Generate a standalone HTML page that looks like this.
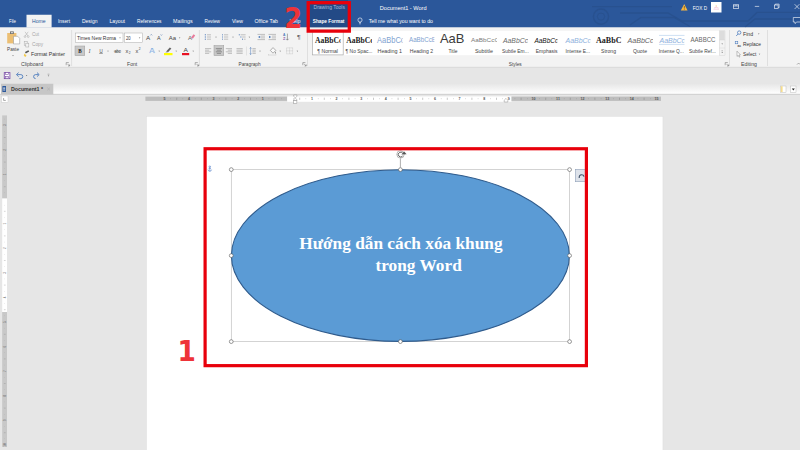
<!DOCTYPE html>
<html lang="vi">
<head>
<meta charset="utf-8">
<title>Document1 - Word</title>
<style>html,body{margin:0;padding:0;background:#e6e6e6;overflow:hidden}svg{display:block}</style>
</head>
<body>
<svg width="800" height="450" viewBox="0 0 800 450">
<defs>
<linearGradient id="tabbar" x1="0" y1="0" x2="0" y2="1"><stop offset="0" stop-color="#e6e6e6"/><stop offset="1" stop-color="#ffffff"/></linearGradient>
<clipPath id="gal"><rect x="312" y="32.5" width="407" height="23.1"/></clipPath>
</defs>
<rect x="0.00" y="0.00" width="800.00" height="450.00" fill="#e6e6e6" />
<rect x="0.00" y="0.00" width="800.00" height="27.50" fill="#2b579a" />
<g stroke="#28518f" stroke-width="1.4" fill="none">
<path d="M592 6.6 H672"/>
<circle cx="601" cy="16.6" r="7.6"/>
<circle cx="601" cy="16.6" r="3.6" stroke-width="1"/>
<path d="M620 13 H668 L682 21 H700"/>
<path d="M630 25 L641 17.5 H674 L690 26.5"/>
<path d="M700 21 H748 L757 12.4 H800"/>
<path d="M745 27 L755 19 H800"/>
</g>
<rect x="310.00" y="0.00" width="38.00" height="27.50" fill="#234a86" />
<rect x="26.50" y="14.75" width="25.10" height="12.85" fill="#f3f3f3" />
<text x="9.00" y="23.27" font-family="'Liberation Sans', sans-serif" font-size="5.6" fill="#ffffff" font-weight="normal" font-style="normal" text-anchor="start" textLength="7.00" lengthAdjust="spacingAndGlyphs" >File</text>
<text x="32.00" y="23.27" font-family="'Liberation Sans', sans-serif" font-size="5.6" fill="#2b579a" font-weight="normal" font-style="normal" text-anchor="start" textLength="13.60" lengthAdjust="spacingAndGlyphs" >Home</text>
<text x="58.00" y="23.27" font-family="'Liberation Sans', sans-serif" font-size="5.6" fill="#ffffff" font-weight="normal" font-style="normal" text-anchor="start" textLength="12.00" lengthAdjust="spacingAndGlyphs" >Insert</text>
<text x="82.00" y="23.27" font-family="'Liberation Sans', sans-serif" font-size="5.6" fill="#ffffff" font-weight="normal" font-style="normal" text-anchor="start" textLength="15.50" lengthAdjust="spacingAndGlyphs" >Design</text>
<text x="109.40" y="23.27" font-family="'Liberation Sans', sans-serif" font-size="5.6" fill="#ffffff" font-weight="normal" font-style="normal" text-anchor="start" textLength="15.60" lengthAdjust="spacingAndGlyphs" >Layout</text>
<text x="137.00" y="23.27" font-family="'Liberation Sans', sans-serif" font-size="5.6" fill="#ffffff" font-weight="normal" font-style="normal" text-anchor="start" textLength="24.50" lengthAdjust="spacingAndGlyphs" >References</text>
<text x="173.00" y="23.27" font-family="'Liberation Sans', sans-serif" font-size="5.6" fill="#ffffff" font-weight="normal" font-style="normal" text-anchor="start" textLength="19.75" lengthAdjust="spacingAndGlyphs" >Mailings</text>
<text x="204.50" y="23.27" font-family="'Liberation Sans', sans-serif" font-size="5.6" fill="#ffffff" font-weight="normal" font-style="normal" text-anchor="start" textLength="15.50" lengthAdjust="spacingAndGlyphs" >Review</text>
<text x="232.00" y="23.27" font-family="'Liberation Sans', sans-serif" font-size="5.6" fill="#ffffff" font-weight="normal" font-style="normal" text-anchor="start" textLength="11.00" lengthAdjust="spacingAndGlyphs" >View</text>
<text x="254.50" y="23.27" font-family="'Liberation Sans', sans-serif" font-size="5.6" fill="#ffffff" font-weight="normal" font-style="normal" text-anchor="start" textLength="23.50" lengthAdjust="spacingAndGlyphs" >Office Tab</text>
<text x="289.50" y="23.27" font-family="'Liberation Sans', sans-serif" font-size="5.6" fill="#ffffff" font-weight="normal" font-style="normal" text-anchor="start" textLength="11.00" lengthAdjust="spacingAndGlyphs" >Help</text>
<text x="313.50" y="8.80" font-family="'Liberation Sans', sans-serif" font-size="5.0" fill="#a9bbd9" font-weight="normal" font-style="normal" text-anchor="start" textLength="31.50" lengthAdjust="spacingAndGlyphs" >Drawing Tools</text>
<text x="312.75" y="23.27" font-family="'Liberation Sans', sans-serif" font-size="5.6" fill="#ffffff" font-weight="bold" font-style="normal" text-anchor="start" textLength="31.65" lengthAdjust="spacingAndGlyphs" >Shape Format</text>
<g stroke="#fff" stroke-width="0.6" fill="none"><circle cx="360" cy="20" r="2.1"/><path d="M359 22.6 H361 M359.2 23.8 H360.8"/></g>
<text x="368.75" y="23.27" font-family="'Liberation Sans', sans-serif" font-size="5.6" fill="#ffffff" font-weight="normal" font-style="normal" text-anchor="start" textLength="64.25" lengthAdjust="spacingAndGlyphs" >Tell me what you want to do</text>
<text x="379.75" y="9.77" font-family="'Liberation Sans', sans-serif" font-size="5.6" fill="#ffffff" font-weight="normal" font-style="normal" text-anchor="start" textLength="46.75" lengthAdjust="spacingAndGlyphs" >Document1  -  Word</text>
<path d="M684.2 4 L687.6 10.4 H680.8 Z" fill="#f5b642" />
<rect x="683.90" y="6.00" width="0.60" height="2.60" fill="#5a3d00" />
<rect x="683.90" y="9.10" width="0.60" height="0.60" fill="#5a3d00" />
<text x="692.75" y="9.77" font-family="'Liberation Sans', sans-serif" font-size="5.6" fill="#ffffff" font-weight="normal" font-style="normal" text-anchor="start" textLength="14.25" lengthAdjust="spacingAndGlyphs" >FOX D</text>
<rect x="711.00" y="2.00" width="10.50" height="10.50" fill="#ffffff" />
<g fill="none" stroke="#e8a0c8" stroke-width="0.5"><path d="M713.5 9.2 H719 M714 8 Q716.2 6.6 718.5 8"/></g>
<path d="M716.2 5 V7" fill="none" stroke="#f0b060" stroke-width="0.5" />
<g stroke="#fff" stroke-width="0.6" fill="none">
<rect x="733.3" y="4.8" width="5.4" height="3.8"/><path d="M733.3 6 H738.7 M736 4.8 V6"/>
<path d="M754.8 6.4 H759.2"/>
<rect x="774.3" y="5" width="3.8" height="3.6"/><path d="M775.3 5 V4.1 H779.1 V7.7 H778.1"/>
<path d="M794.6 4.2 L799.4 9 M799.4 4.2 L794.6 9"/>
<path d="M793.3 17.5 H800 M793.3 17.5 V22 H795 V23.6 L796.8 22 H800"/>
</g>
<rect x="0.00" y="27.50" width="800.00" height="39.50" fill="#f3f3f3" />
<rect x="0.00" y="66.80" width="800.00" height="1.20" fill="#dcdcdc" />
<line x1="71.60" y1="30.00" x2="71.60" y2="66.00" stroke="#d2d2d2" stroke-width="0.6" />
<line x1="199.40" y1="30.00" x2="199.40" y2="66.00" stroke="#d2d2d2" stroke-width="0.6" />
<line x1="307.50" y1="30.00" x2="307.50" y2="66.00" stroke="#d2d2d2" stroke-width="0.6" />
<line x1="729.50" y1="30.00" x2="729.50" y2="66.00" stroke="#d2d2d2" stroke-width="0.6" />
<line x1="767.50" y1="30.00" x2="767.50" y2="66.00" stroke="#d2d2d2" stroke-width="0.6" />
<g>
<rect x="7.20" y="33.00" width="9.20" height="10.40" fill="#ecbf74" />
<rect x="10.00" y="31.40" width="3.80" height="2.60" fill="#707070" />
<rect x="10.90" y="32.20" width="2.00" height="1.00" fill="#e9e9e9" />
<path d="M13.5 36.3 H17.7 L19.7 38.3 V43.9 H13.5 Z" fill="#ffffff" stroke="#8a8a8a" stroke-width="0.5" />
</g>
<text x="7.00" y="50.73" font-family="'Liberation Sans', sans-serif" font-size="5.5" fill="#444444" font-weight="normal" font-style="normal" text-anchor="start" textLength="12.00" lengthAdjust="spacingAndGlyphs" >Paste</text>
<path d="M12.20 55.20 L13.80 55.20 L13.00 56.20 Z" fill="#666" />
<g stroke="#a8a8a8" stroke-width="0.5" fill="none"><path d="M25 31.8 L28 36 M28.2 31.8 L25.2 36"/><circle cx="25" cy="36.6" r="0.9"/><circle cx="28.2" cy="36.6" r="0.9"/></g>
<text x="32.00" y="36.38" font-family="'Liberation Sans', sans-serif" font-size="5.5" fill="#a6a6a6" font-weight="normal" font-style="normal" text-anchor="start" textLength="7.00" lengthAdjust="spacingAndGlyphs" >Cut</text>
<g stroke="#a8a8a8" stroke-width="0.5" fill="#f3f3f3"><rect x="24.2" y="41.6" width="3" height="3.8"/><rect x="25.8" y="43.2" width="3" height="3.8"/></g>
<text x="32.00" y="46.38" font-family="'Liberation Sans', sans-serif" font-size="5.5" fill="#a6a6a6" font-weight="normal" font-style="normal" text-anchor="start" textLength="11.00" lengthAdjust="spacingAndGlyphs" >Copy</text>
<path d="M25 52 L28.4 50.2 L29.2 51.6 L25.8 53.6 Z" fill="#555" />
<path d="M24.4 53.6 L26.6 55.8 L25.2 57 L23.8 55.4 Z" fill="#f2c94c" />
<text x="31.00" y="55.98" font-family="'Liberation Sans', sans-serif" font-size="5.5" fill="#333" font-weight="normal" font-style="normal" text-anchor="start" textLength="34.00" lengthAdjust="spacingAndGlyphs" >Format Painter</text>
<text x="21.00" y="66.38" font-family="'Liberation Sans', sans-serif" font-size="5.5" fill="#444444" font-weight="normal" font-style="normal" text-anchor="start" textLength="22.00" lengthAdjust="spacingAndGlyphs" >Clipboard</text>
<path d="M66.20 65.20 V62.60 H68.80" fill="none" stroke="#666" stroke-width="0.5" />
<path d="M67.50 63.90 L69.60 66.00 M69.60 64.40 V66.00 H68.00" fill="none" stroke="#666" stroke-width="0.5" />
<rect x="75.40" y="33.00" width="47.60" height="9.50" fill="#ffffff" stroke="#ababab" stroke-width="0.5" />
<rect x="124.40" y="33.00" width="18.10" height="9.50" fill="#ffffff" stroke="#ababab" stroke-width="0.5" />
<text x="77.00" y="39.73" font-family="'Liberation Sans', sans-serif" font-size="5.5" fill="#333" font-weight="normal" font-style="normal" text-anchor="start" textLength="39.00" lengthAdjust="spacingAndGlyphs" >Times New Roma</text>
<path d="M119.20 37.50 L120.80 37.50 L120.00 38.50 Z" fill="#666" />
<text x="126.00" y="39.73" font-family="'Liberation Sans', sans-serif" font-size="5.5" fill="#333" font-weight="normal" font-style="normal" text-anchor="start" textLength="4.60" lengthAdjust="spacingAndGlyphs" >20</text>
<path d="M138.80 37.50 L140.40 37.50 L139.60 38.50 Z" fill="#666" />
<text x="146.00" y="40.13" font-family="'Liberation Sans', sans-serif" font-size="6.2" fill="#444444" font-weight="normal" font-style="normal" text-anchor="start" textLength="4.20" lengthAdjust="spacingAndGlyphs" >A</text>
<path d="M150.4 35.4 L151.3 34.4 L152.2 35.4" fill="none" stroke="#2b579a" stroke-width="0.45" />
<text x="157.00" y="40.24" font-family="'Liberation Sans', sans-serif" font-size="5.4" fill="#444444" font-weight="normal" font-style="normal" text-anchor="start" textLength="3.60" lengthAdjust="spacingAndGlyphs" >A</text>
<path d="M160.6 34.5 L161.4 35.4 L162.2 34.5" fill="none" stroke="#2b579a" stroke-width="0.45" />
<text x="168.75" y="39.52" font-family="'Liberation Sans', sans-serif" font-size="5.6" fill="#444444" font-weight="normal" font-style="normal" text-anchor="start" textLength="7.25" lengthAdjust="spacingAndGlyphs" >Aa</text>
<path d="M178.85 37.50 L180.35 37.50 L179.60 38.50 Z" fill="#666" />
<text x="188.00" y="39.52" font-family="'Liberation Sans', sans-serif" font-size="5.6" fill="#666" font-weight="normal" font-style="normal" text-anchor="start" textLength="4.00" lengthAdjust="spacingAndGlyphs" >A</text>
<path d="M191 37.6 L193.6 34.2 L195.2 35.4 L192.8 38.8 Z" fill="#e87a9a" />
<rect x="75.00" y="46.00" width="9.75" height="9.60" fill="#c8c8c8" stroke="#9a9a9a" stroke-width="0.5" />
<text x="78.20" y="52.92" font-family="'Liberation Serif', serif" font-size="5.6" fill="#222" font-weight="bold" font-style="normal" text-anchor="start" textLength="3.40" lengthAdjust="spacingAndGlyphs" >B</text>
<text x="88.80" y="52.99" font-family="'Liberation Serif', serif" font-size="5.8" fill="#444" font-weight="normal" font-style="italic" text-anchor="start" textLength="1.60" lengthAdjust="spacingAndGlyphs" >I</text>
<text x="99.40" y="52.54" font-family="'Liberation Sans', sans-serif" font-size="5.4" fill="#444" font-weight="normal" font-style="normal" text-anchor="start" textLength="3.20" lengthAdjust="spacingAndGlyphs" >U</text>
<line x1="99.20" y1="53.40" x2="102.80" y2="53.40" stroke="#444" stroke-width="0.5" />
<path d="M107.25 50.80 L108.75 50.80 L108.00 51.80 Z" fill="#666" />
<text x="114.40" y="52.63" font-family="'Liberation Sans', sans-serif" font-size="4.8" fill="#444" font-weight="normal" font-style="normal" text-anchor="start" textLength="6.20" lengthAdjust="spacingAndGlyphs" >abc</text>
<line x1="113.80" y1="51.20" x2="121.20" y2="51.20" stroke="#444" stroke-width="0.4" />
<text x="125.60" y="52.84" font-family="'Liberation Sans', sans-serif" font-size="5.4" fill="#444" font-weight="normal" font-style="normal" text-anchor="start" textLength="2.80" lengthAdjust="spacingAndGlyphs" >x</text>
<text x="128.80" y="53.68" font-family="'Liberation Sans', sans-serif" font-size="3" fill="#444" font-weight="normal" font-style="normal" text-anchor="start" textLength="1.80" lengthAdjust="spacingAndGlyphs" >2</text>
<text x="135.60" y="52.84" font-family="'Liberation Sans', sans-serif" font-size="5.4" fill="#444" font-weight="normal" font-style="normal" text-anchor="start" textLength="2.80" lengthAdjust="spacingAndGlyphs" >x</text>
<text x="138.80" y="49.68" font-family="'Liberation Sans', sans-serif" font-size="3" fill="#444" font-weight="normal" font-style="normal" text-anchor="start" textLength="1.80" lengthAdjust="spacingAndGlyphs" >2</text>
<text x="148.90" y="53.48" font-family="'Liberation Sans', sans-serif" font-size="8" fill="#9dbde6" font-weight="bold" font-style="normal" text-anchor="start" textLength="6.10" lengthAdjust="spacingAndGlyphs" >A</text>
<text x="150.00" y="52.82" font-family="'Liberation Sans', sans-serif" font-size="5.6" fill="#ffffff" font-weight="bold" font-style="normal" text-anchor="start" textLength="3.90" lengthAdjust="spacingAndGlyphs" >A</text>
<path d="M150 53.2 L152 48.2 L153.9 53.2 M150.8 51.5 H153.2" fill="none" stroke="#6f9fd8" stroke-width="0.4" />
<path d="M158.45 50.80 L159.95 50.80 L159.20 51.80 Z" fill="#666" />
<path d="M166.4 51.2 L169.8 47.4 L171.4 48.6 L168 52.2 Z" fill="#666" />
<path d="M165.4 52.4 L166.4 51.2 L168 52.2 Z" fill="#888" />
<rect x="164.00" y="53.00" width="8.50" height="2.20" fill="#ffff00" />
<path d="M175.45 50.80 L176.95 50.80 L176.20 51.80 Z" fill="#666" />
<text x="183.40" y="51.96" font-family="'Liberation Sans', sans-serif" font-size="6" fill="#444" font-weight="normal" font-style="normal" text-anchor="start" textLength="4.40" lengthAdjust="spacingAndGlyphs" >A</text>
<rect x="182.00" y="53.00" width="7.20" height="2.20" fill="#e81123" />
<path d="M192.45 50.80 L193.95 50.80 L193.20 51.80 Z" fill="#666" />
<text x="127.00" y="66.38" font-family="'Liberation Sans', sans-serif" font-size="5.5" fill="#444444" font-weight="normal" font-style="normal" text-anchor="start" textLength="10.25" lengthAdjust="spacingAndGlyphs" >Font</text>
<path d="M195.20 65.20 V62.60 H197.80" fill="none" stroke="#666" stroke-width="0.5" />
<path d="M196.50 63.90 L198.60 66.00 M198.60 64.40 V66.00 H197.00" fill="none" stroke="#666" stroke-width="0.5" />
<rect x="204.80" y="34.30" width="1.10" height="1.00" fill="#4a78b8" />
<line x1="207.00" y1="34.80" x2="211.00" y2="34.80" stroke="#8a8a8a" stroke-width="0.5" />
<rect x="204.80" y="36.50" width="1.10" height="1.00" fill="#4a78b8" />
<line x1="207.00" y1="37.00" x2="211.00" y2="37.00" stroke="#8a8a8a" stroke-width="0.5" />
<rect x="204.80" y="38.70" width="1.10" height="1.00" fill="#4a78b8" />
<line x1="207.00" y1="39.20" x2="211.00" y2="39.20" stroke="#8a8a8a" stroke-width="0.5" />
<path d="M215.25 36.80 L216.75 36.80 L216.00 37.80 Z" fill="#666" />
<rect x="222.00" y="34.20" width="0.70" height="1.20" fill="#4a78b8" />
<line x1="224.00" y1="34.80" x2="228.20" y2="34.80" stroke="#8a8a8a" stroke-width="0.5" />
<rect x="222.00" y="36.40" width="0.70" height="1.20" fill="#4a78b8" />
<line x1="224.00" y1="37.00" x2="228.20" y2="37.00" stroke="#8a8a8a" stroke-width="0.5" />
<rect x="222.00" y="38.60" width="0.70" height="1.20" fill="#4a78b8" />
<line x1="224.00" y1="39.20" x2="228.20" y2="39.20" stroke="#8a8a8a" stroke-width="0.5" />
<path d="M232.25 36.80 L233.75 36.80 L233.00 37.80 Z" fill="#666" />
<rect x="238.80" y="34.30" width="1.00" height="1.00" fill="#4a78b8" />
<line x1="240.60" y1="34.80" x2="245.60" y2="34.80" stroke="#8a8a8a" stroke-width="0.5" />
<rect x="240.40" y="36.50" width="1.00" height="1.00" fill="#4a78b8" />
<line x1="242.20" y1="37.00" x2="245.60" y2="37.00" stroke="#8a8a8a" stroke-width="0.5" />
<rect x="242.00" y="38.70" width="1.00" height="1.00" fill="#4a78b8" />
<line x1="243.80" y1="39.20" x2="245.60" y2="39.20" stroke="#8a8a8a" stroke-width="0.5" />
<path d="M248.65 36.80 L250.15 36.80 L249.40 37.80 Z" fill="#666" />
<line x1="257.50" y1="34.40" x2="265.00" y2="34.40" stroke="#8a8a8a" stroke-width="0.5" />
<line x1="257.50" y1="39.60" x2="265.00" y2="39.60" stroke="#8a8a8a" stroke-width="0.5" />
<line x1="260.90" y1="36.10" x2="265.00" y2="36.10" stroke="#8a8a8a" stroke-width="0.5" />
<line x1="260.90" y1="37.90" x2="265.00" y2="37.90" stroke="#8a8a8a" stroke-width="0.5" />
<line x1="268.50" y1="34.40" x2="276.00" y2="34.40" stroke="#8a8a8a" stroke-width="0.5" />
<line x1="268.50" y1="39.60" x2="276.00" y2="39.60" stroke="#8a8a8a" stroke-width="0.5" />
<line x1="271.90" y1="36.10" x2="276.00" y2="36.10" stroke="#8a8a8a" stroke-width="0.5" />
<line x1="271.90" y1="37.90" x2="276.00" y2="37.90" stroke="#8a8a8a" stroke-width="0.5" />
<path d="M260.2 35.7 L258 37 L260.2 38.3 Z" fill="#4a78b8" />
<path d="M269 35.7 L271.2 37 L269 38.3 Z" fill="#4a78b8" />
<text x="283.00" y="36.30" font-family="'Liberation Sans', sans-serif" font-size="3.6" fill="#4a78b8" font-weight="bold" font-style="normal" text-anchor="start" textLength="2.40" lengthAdjust="spacingAndGlyphs" >A</text>
<text x="283.00" y="40.30" font-family="'Liberation Sans', sans-serif" font-size="3.6" fill="#8a5aa8" font-weight="bold" font-style="normal" text-anchor="start" textLength="2.40" lengthAdjust="spacingAndGlyphs" >Z</text>
<path d="M287.4 33.6 V40 M286.2 38.8 L287.4 40.2 L288.6 38.8" fill="none" stroke="#555" stroke-width="0.5" />
<text x="297.00" y="39.23" font-family="'Liberation Sans', sans-serif" font-size="6.2" fill="#555" font-weight="normal" font-style="normal" text-anchor="start" textLength="3.60" lengthAdjust="spacingAndGlyphs" >¶</text>
<line x1="205.00" y1="48.60" x2="211.20" y2="48.60" stroke="#8a8a8a" stroke-width="0.5" />
<line x1="205.00" y1="50.20" x2="209.20" y2="50.20" stroke="#8a8a8a" stroke-width="0.5" />
<line x1="205.00" y1="51.80" x2="211.20" y2="51.80" stroke="#8a8a8a" stroke-width="0.5" />
<line x1="205.00" y1="53.40" x2="209.20" y2="53.40" stroke="#8a8a8a" stroke-width="0.5" />
<rect x="214.00" y="45.60" width="9.75" height="10.00" fill="#c8c8c8" stroke="#9a9a9a" stroke-width="0.5" />
<line x1="215.80" y1="48.60" x2="222.00" y2="48.60" stroke="#555" stroke-width="0.5" />
<line x1="216.80" y1="50.20" x2="221.00" y2="50.20" stroke="#555" stroke-width="0.5" />
<line x1="215.80" y1="51.80" x2="222.00" y2="51.80" stroke="#555" stroke-width="0.5" />
<line x1="216.80" y1="53.40" x2="221.00" y2="53.40" stroke="#555" stroke-width="0.5" />
<line x1="225.80" y1="48.60" x2="232.00" y2="48.60" stroke="#8a8a8a" stroke-width="0.5" />
<line x1="227.80" y1="50.20" x2="232.00" y2="50.20" stroke="#8a8a8a" stroke-width="0.5" />
<line x1="225.80" y1="51.80" x2="232.00" y2="51.80" stroke="#8a8a8a" stroke-width="0.5" />
<line x1="227.80" y1="53.40" x2="232.00" y2="53.40" stroke="#8a8a8a" stroke-width="0.5" />
<line x1="236.50" y1="48.60" x2="242.70" y2="48.60" stroke="#8a8a8a" stroke-width="0.5" />
<line x1="236.50" y1="50.20" x2="242.70" y2="50.20" stroke="#8a8a8a" stroke-width="0.5" />
<line x1="236.50" y1="51.80" x2="242.70" y2="51.80" stroke="#8a8a8a" stroke-width="0.5" />
<line x1="236.50" y1="53.40" x2="242.70" y2="53.40" stroke="#8a8a8a" stroke-width="0.5" />
<line x1="246.50" y1="46.50" x2="246.50" y2="55.50" stroke="#d0d0d0" stroke-width="0.5" />
<path d="M250.6 47.6 V54.4 M249.8 48.6 L250.6 47.4 L251.4 48.6 M249.8 53.4 L250.6 54.6 L251.4 53.4" fill="none" stroke="#4a78b8" stroke-width="0.5" />
<line x1="252.40" y1="48.60" x2="255.80" y2="48.60" stroke="#8a8a8a" stroke-width="0.5" />
<line x1="252.40" y1="50.20" x2="255.80" y2="50.20" stroke="#8a8a8a" stroke-width="0.5" />
<line x1="252.40" y1="51.80" x2="255.80" y2="51.80" stroke="#8a8a8a" stroke-width="0.5" />
<line x1="252.40" y1="53.40" x2="255.80" y2="53.40" stroke="#8a8a8a" stroke-width="0.5" />
<path d="M259.25 50.80 L260.75 50.80 L260.00 51.80 Z" fill="#666" />
<path d="M270.4 50.4 L273 47.6 L275.8 50.4 L273 53.2 Z" fill="#fafafa" stroke="#666" stroke-width="0.5" />
<path d="M275.4 51.4 Q276.4 53 275.4 53.8 Q274.4 53 275.4 51.4 Z" fill="#666" />
<rect x="268.80" y="54.20" width="7.20" height="1.20" fill="#ffffff" stroke="#bbb" stroke-width="0.3" />
<path d="M279.45 50.80 L280.95 50.80 L280.20 51.80 Z" fill="#666" />
<g stroke="#9a9a9a" stroke-width="0.4" fill="none" stroke-dasharray="0.6 0.5"><rect x="286.6" y="47.8" width="6" height="6"/><path d="M289.6 47.8 V53.8 M286.6 50.8 H292.6"/></g>
<path d="M296.65 50.80 L298.15 50.80 L297.40 51.80 Z" fill="#666" />
<text x="238.50" y="66.38" font-family="'Liberation Sans', sans-serif" font-size="5.5" fill="#444444" font-weight="normal" font-style="normal" text-anchor="start" textLength="22.10" lengthAdjust="spacingAndGlyphs" >Paragraph</text>
<path d="M302.80 65.20 V62.60 H305.40" fill="none" stroke="#666" stroke-width="0.5" />
<path d="M304.10 63.90 L306.20 66.00 M306.20 64.40 V66.00 H304.60" fill="none" stroke="#666" stroke-width="0.5" />
<rect x="312.00" y="30.80" width="407.00" height="24.40" fill="#ffffff" />
<rect x="312.60" y="31.10" width="30.60" height="23.80" fill="#ffffff" stroke="#ababab" stroke-width="0.7" />
<clipPath id="c3150"><rect x="313.00" y="32.5" width="27.60" height="23"/></clipPath>
<text x="315.00" y="42.85" font-family="'Liberation Serif', serif" font-size="8.2" fill="#222" font-weight="bold" font-style="normal" text-anchor="start" textLength="27.40" lengthAdjust="spacingAndGlyphs" clip-path="url(#c3150)">AaBbCc</text>
<clipPath id="c3462"><rect x="344.25" y="32.5" width="27.75" height="23"/></clipPath>
<text x="346.25" y="42.85" font-family="'Liberation Serif', serif" font-size="8.2" fill="#222" font-weight="bold" font-style="normal" text-anchor="start" textLength="27.35" lengthAdjust="spacingAndGlyphs" clip-path="url(#c3462)">AaBbCc</text>
<clipPath id="c3770"><rect x="375.00" y="32.5" width="27.60" height="23"/></clipPath>
<text x="377.00" y="43.22" font-family="'Liberation Sans', sans-serif" font-size="8.4" fill="#7fa3d1" font-weight="normal" font-style="normal" text-anchor="start" textLength="27.60" lengthAdjust="spacingAndGlyphs" clip-path="url(#c3770)">AaBbCc</text>
<clipPath id="c4090"><rect x="407.00" y="32.5" width="27.40" height="23"/></clipPath>
<text x="409.00" y="42.35" font-family="'Liberation Sans', sans-serif" font-size="6.8" fill="#7fa3d1" font-weight="normal" font-style="normal" text-anchor="start" textLength="27.00" lengthAdjust="spacingAndGlyphs" clip-path="url(#c4090)">AaBbCcE</text>
<clipPath id="ctitle"><rect x="438" y="34" width="27" height="12"/></clipPath>
<text x="440" y="42.9" font-family="'Liberation Sans', sans-serif" font-size="13" fill="#3a3a3a" textLength="24.4" lengthAdjust="spacingAndGlyphs" clip-path="url(#ctitle)">AaB</text>
<clipPath id="c4710"><rect x="469.00" y="32.5" width="28.00" height="23"/></clipPath>
<text x="471.00" y="42.26" font-family="'Liberation Sans', sans-serif" font-size="6" fill="#7a7a7a" font-weight="normal" font-style="normal" text-anchor="start" textLength="28.00" lengthAdjust="spacingAndGlyphs" clip-path="url(#c4710)">AaBbCcC</text>
<clipPath id="c5030"><rect x="501.00" y="32.5" width="27.00" height="23"/></clipPath>
<text x="503.00" y="42.69" font-family="'Liberation Sans', sans-serif" font-size="7.2" fill="#6a6a6a" font-weight="normal" font-style="italic" text-anchor="start" textLength="27.00" lengthAdjust="spacingAndGlyphs" clip-path="url(#c5030)">AaBbCcI</text>
<clipPath id="c5344"><rect x="532.40" y="32.5" width="25.10" height="23"/></clipPath>
<text x="534.40" y="42.76" font-family="'Liberation Sans', sans-serif" font-size="7.4" fill="#111" font-weight="normal" font-style="italic" text-anchor="start" textLength="25.60" lengthAdjust="spacingAndGlyphs" clip-path="url(#c5344)">AaBbCcI</text>
<clipPath id="c5656"><rect x="563.60" y="32.5" width="27.00" height="23"/></clipPath>
<text x="565.60" y="42.69" font-family="'Liberation Sans', sans-serif" font-size="7.2" fill="#8db0dc" font-weight="normal" font-style="italic" text-anchor="start" textLength="27.40" lengthAdjust="spacingAndGlyphs" clip-path="url(#c5656)">AaBbCcI</text>
<clipPath id="c5960"><rect x="594.00" y="32.5" width="27.50" height="23"/></clipPath>
<text x="596.00" y="42.91" font-family="'Liberation Serif', serif" font-size="7.8" fill="#222" font-weight="bold" font-style="normal" text-anchor="start" textLength="25.50" lengthAdjust="spacingAndGlyphs" clip-path="url(#c5960)">AaBbC</text>
<clipPath id="c6275"><rect x="625.50" y="32.5" width="27.50" height="23"/></clipPath>
<text x="627.50" y="42.69" font-family="'Liberation Sans', sans-serif" font-size="7.2" fill="#666" font-weight="normal" font-style="italic" text-anchor="start" textLength="28.00" lengthAdjust="spacingAndGlyphs" clip-path="url(#c6275)">AaBbCcI</text>
<clipPath id="c6595"><rect x="657.50" y="32.5" width="27.00" height="23"/></clipPath>
<text x="659.50" y="42.69" font-family="'Liberation Sans', sans-serif" font-size="7.2" fill="#8db0dc" font-weight="normal" font-style="italic" text-anchor="start" textLength="27.50" lengthAdjust="spacingAndGlyphs" clip-path="url(#c6595)">AaBbCcI</text>
<line x1="659.00" y1="35.40" x2="684.50" y2="35.40" stroke="#9dc0e6" stroke-width="0.5" />
<line x1="659.00" y1="44.40" x2="684.50" y2="44.40" stroke="#9dc0e6" stroke-width="0.5" />
<clipPath id="c6905"><rect x="688.50" y="32.5" width="27.50" height="23"/></clipPath>
<text x="690.50" y="42.48" font-family="'Liberation Sans', sans-serif" font-size="6.6" fill="#666" font-weight="normal" font-style="normal" text-anchor="start" textLength="25.00" lengthAdjust="spacingAndGlyphs" clip-path="url(#c6905)">AABBCC</text>
<text x="317.25" y="52.98" font-family="'Liberation Sans', sans-serif" font-size="5.5" fill="#444444" font-weight="normal" font-style="normal" text-anchor="start" textLength="20.75" lengthAdjust="spacingAndGlyphs" >¶ Normal</text>
<text x="345.60" y="52.98" font-family="'Liberation Sans', sans-serif" font-size="5.5" fill="#444444" font-weight="normal" font-style="normal" text-anchor="start" textLength="26.90" lengthAdjust="spacingAndGlyphs" >¶ No Spac...</text>
<text x="377.50" y="52.98" font-family="'Liberation Sans', sans-serif" font-size="5.5" fill="#444444" font-weight="normal" font-style="normal" text-anchor="start" textLength="24.50" lengthAdjust="spacingAndGlyphs" >Heading 1</text>
<text x="409.75" y="52.98" font-family="'Liberation Sans', sans-serif" font-size="5.5" fill="#444444" font-weight="normal" font-style="normal" text-anchor="start" textLength="23.25" lengthAdjust="spacingAndGlyphs" >Heading 2</text>
<text x="448.50" y="52.98" font-family="'Liberation Sans', sans-serif" font-size="5.5" fill="#444444" font-weight="normal" font-style="normal" text-anchor="start" textLength="9.00" lengthAdjust="spacingAndGlyphs" >Title</text>
<text x="475.00" y="52.98" font-family="'Liberation Sans', sans-serif" font-size="5.5" fill="#444444" font-weight="normal" font-style="normal" text-anchor="start" textLength="18.00" lengthAdjust="spacingAndGlyphs" >Subtitle</text>
<text x="502.00" y="52.98" font-family="'Liberation Sans', sans-serif" font-size="5.5" fill="#444444" font-weight="normal" font-style="normal" text-anchor="start" textLength="26.75" lengthAdjust="spacingAndGlyphs" >Subtle Em...</text>
<text x="535.75" y="52.98" font-family="'Liberation Sans', sans-serif" font-size="5.5" fill="#444444" font-weight="normal" font-style="normal" text-anchor="start" textLength="21.75" lengthAdjust="spacingAndGlyphs" >Emphasis</text>
<text x="565.50" y="52.98" font-family="'Liberation Sans', sans-serif" font-size="5.5" fill="#444444" font-weight="normal" font-style="normal" text-anchor="start" textLength="24.50" lengthAdjust="spacingAndGlyphs" >Intense E...</text>
<text x="601.00" y="52.98" font-family="'Liberation Sans', sans-serif" font-size="5.5" fill="#444444" font-weight="normal" font-style="normal" text-anchor="start" textLength="15.00" lengthAdjust="spacingAndGlyphs" >Strong</text>
<text x="633.00" y="52.98" font-family="'Liberation Sans', sans-serif" font-size="5.5" fill="#444444" font-weight="normal" font-style="normal" text-anchor="start" textLength="14.00" lengthAdjust="spacingAndGlyphs" >Quote</text>
<text x="658.75" y="52.98" font-family="'Liberation Sans', sans-serif" font-size="5.5" fill="#444444" font-weight="normal" font-style="normal" text-anchor="start" textLength="25.00" lengthAdjust="spacingAndGlyphs" >Intense Q...</text>
<text x="689.00" y="52.98" font-family="'Liberation Sans', sans-serif" font-size="5.5" fill="#444444" font-weight="normal" font-style="normal" text-anchor="start" textLength="27.00" lengthAdjust="spacingAndGlyphs" >Subtle Ref...</text>
<rect x="719.40" y="30.80" width="5.60" height="24.40" fill="#f3f3f3" stroke="#d0d0d0" stroke-width="0.4" />
<rect x="719.60" y="31.00" width="5.20" height="9.00" fill="#dcdcdc" />
<line x1="719.40" y1="40.00" x2="725.00" y2="40.00" stroke="#d0d0d0" stroke-width="0.4" />
<line x1="719.40" y1="48.00" x2="725.00" y2="48.00" stroke="#d0d0d0" stroke-width="0.4" />
<path d="M721.45 43.60 L722.95 43.60 L722.20 44.60 Z" fill="#666" />
<path d="M721.45 52.00 L722.95 52.00 L722.20 53.00 Z" fill="#666" />
<line x1="721.40" y1="50.80" x2="723.00" y2="50.80" stroke="#666" stroke-width="0.4" />
<text x="508.75" y="66.38" font-family="'Liberation Sans', sans-serif" font-size="5.5" fill="#444444" font-weight="normal" font-style="normal" text-anchor="start" textLength="13.00" lengthAdjust="spacingAndGlyphs" >Styles</text>
<path d="M725.20 65.20 V62.60 H727.80" fill="none" stroke="#666" stroke-width="0.5" />
<path d="M726.50 63.90 L728.60 66.00 M728.60 64.40 V66.00 H727.00" fill="none" stroke="#666" stroke-width="0.5" />
<g stroke="#3a6fb8" stroke-width="0.7" fill="none"><circle cx="739.2" cy="32.6" r="1.7"/><path d="M738 34 L736.2 36"/></g>
<text x="743.00" y="35.73" font-family="'Liberation Sans', sans-serif" font-size="5.5" fill="#333" font-weight="normal" font-style="normal" text-anchor="start" textLength="10.00" lengthAdjust="spacingAndGlyphs" >Find</text>
<path d="M758.00 33.60 L759.50 33.60 L758.75 34.60 Z" fill="#666" />
<g fill="#555"><rect x="735.2" y="41.6" width="2.6" height="2.2" fill="none" stroke="#3a6fb8" stroke-width="0.5"/></g>
<text x="737.60" y="46.75" font-family="'Liberation Sans', sans-serif" font-size="3.2" fill="#444" font-weight="bold" font-style="normal" text-anchor="start" textLength="3.40" lengthAdjust="spacingAndGlyphs" >ac</text>
<text x="743.00" y="45.98" font-family="'Liberation Sans', sans-serif" font-size="5.5" fill="#333" font-weight="normal" font-style="normal" text-anchor="start" textLength="18.00" lengthAdjust="spacingAndGlyphs" >Replace</text>
<path d="M737 51.2 V56.4 L738.2 55.3 L739.2 57.2 L739.9 56.8 L739 55 L740.4 54.8 Z" fill="#fff" stroke="#666" stroke-width="0.4" />
<text x="743.00" y="55.98" font-family="'Liberation Sans', sans-serif" font-size="5.5" fill="#333" font-weight="normal" font-style="normal" text-anchor="start" textLength="13.25" lengthAdjust="spacingAndGlyphs" >Select</text>
<path d="M758.75 53.80 L760.25 53.80 L759.50 54.80 Z" fill="#666" />
<text x="741.00" y="66.38" font-family="'Liberation Sans', sans-serif" font-size="5.5" fill="#444444" font-weight="normal" font-style="normal" text-anchor="start" textLength="16.00" lengthAdjust="spacingAndGlyphs" >Editing</text>
<path d="M797 64.6 L798.6 63 L800.2 64.6" fill="none" stroke="#666" stroke-width="0.5" />
<rect x="4.30" y="72.60" width="5.60" height="6.00" fill="#ffffff" stroke="#7d52a8" stroke-width="0.9" />
<rect x="5.60" y="72.60" width="3.00" height="2.00" fill="#ffffff" stroke="#7d52a8" stroke-width="0.6" />
<rect x="5.60" y="76.40" width="3.00" height="2.20" fill="#e8def2" stroke="#7d52a8" stroke-width="0.6" />
<path d="M17.2 74.6 H20.8 Q22.8 74.6 22.8 76.6 Q22.8 78.6 20.6 78.6 H19.4" fill="none" stroke="#3a6fb8" stroke-width="0.8" />
<path d="M18.6 72.6 L16.4 74.6 L18.6 76.6" fill="none" stroke="#3a6fb8" stroke-width="0.8" />
<path d="M25.90 75.00 L27.30 75.00 L26.60 76.00 Z" fill="#666" />
<path d="M38.4 74.6 H35.6 Q33.6 74.6 33.6 76.6 Q33.6 78.6 35.6 78.6" fill="none" stroke="#3a6fb8" stroke-width="0.8" />
<path d="M37 72.6 L39.2 74.6 L37 76.6" fill="none" stroke="#3a6fb8" stroke-width="0.8" />
<line x1="47.60" y1="74.20" x2="49.40" y2="74.20" stroke="#666" stroke-width="0.4" />
<path d="M47.75 75.60 L49.25 75.60 L48.50 76.60 Z" fill="#666" />
<rect x="0.00" y="83.50" width="800.00" height="10.50" fill="url(#tabbar)" />
<rect x="0.00" y="93.80" width="800.00" height="0.90" fill="#cacaca" />
<rect x="1.00" y="83.75" width="52.30" height="10.65" fill="#c6c6c6" />
<rect x="2.40" y="86.00" width="3.60" height="6.00" fill="#2b579a" />
<rect x="3.20" y="87.60" width="2.00" height="1.00" fill="#ffffff" />
<rect x="3.20" y="89.60" width="2.00" height="0.80" fill="#ffffff" />
<text x="11.00" y="90.91" font-family="'Liberation Sans', sans-serif" font-size="5.3" fill="#333" font-weight="bold" font-style="normal" text-anchor="start" textLength="32.00" lengthAdjust="spacingAndGlyphs" >Document1 *</text>
<path d="M47.2 87.6 L50 90.4 M50 87.6 L47.2 90.4" fill="none" stroke="#aaa" stroke-width="0.5" />
<rect x="780.60" y="86.00" width="5.40" height="6.20" fill="#ffffff" stroke="#b0b0b0" stroke-width="0.4" />
<rect x="780.80" y="86.20" width="1.80" height="5.80" fill="#f6dc8c" />
<rect x="790.60" y="86.00" width="5.40" height="6.20" fill="#ffffff" stroke="#b0b0b0" stroke-width="0.4" />
<path d="M791.8 88.4 H794.8 L793.3 90.4 Z" fill="#222" />
<rect x="1.60" y="96.00" width="6.40" height="6.20" fill="#ffffff" stroke="#c8c8c8" stroke-width="0.4" />
<path d="M3.6 98 V100.4 H5.8" fill="none" stroke="#555" stroke-width="0.5" />
<rect x="145.40" y="96.60" width="141.80" height="4.30" fill="#bdbdbd" />
<rect x="287.20" y="96.40" width="224.30" height="5.40" fill="#ffffff" />
<rect x="511.50" y="96.60" width="149.50" height="4.30" fill="#bdbdbd" />
<text x="164.40" y="100.05" font-family="'Liberation Sans', sans-serif" font-size="3.6" fill="#555" font-weight="bold" text-anchor="middle">5</text>
<line x1="176.70" y1="97.70" x2="176.70" y2="99.90" stroke="#777" stroke-width="0.4" />
<rect x="170.30" y="98.50" width="0.50" height="0.60" fill="#888" />
<rect x="182.60" y="98.50" width="0.50" height="0.60" fill="#888" />
<text x="189.00" y="100.05" font-family="'Liberation Sans', sans-serif" font-size="3.6" fill="#555" font-weight="bold" text-anchor="middle">4</text>
<line x1="201.30" y1="97.70" x2="201.30" y2="99.90" stroke="#777" stroke-width="0.4" />
<rect x="194.90" y="98.50" width="0.50" height="0.60" fill="#888" />
<rect x="207.20" y="98.50" width="0.50" height="0.60" fill="#888" />
<text x="213.60" y="100.05" font-family="'Liberation Sans', sans-serif" font-size="3.6" fill="#555" font-weight="bold" text-anchor="middle">3</text>
<line x1="225.90" y1="97.70" x2="225.90" y2="99.90" stroke="#777" stroke-width="0.4" />
<rect x="219.50" y="98.50" width="0.50" height="0.60" fill="#888" />
<rect x="231.80" y="98.50" width="0.50" height="0.60" fill="#888" />
<text x="238.20" y="100.05" font-family="'Liberation Sans', sans-serif" font-size="3.6" fill="#555" font-weight="bold" text-anchor="middle">2</text>
<line x1="250.50" y1="97.70" x2="250.50" y2="99.90" stroke="#777" stroke-width="0.4" />
<rect x="244.10" y="98.50" width="0.50" height="0.60" fill="#888" />
<rect x="256.40" y="98.50" width="0.50" height="0.60" fill="#888" />
<text x="262.80" y="100.05" font-family="'Liberation Sans', sans-serif" font-size="3.6" fill="#555" font-weight="bold" text-anchor="middle">1</text>
<line x1="275.10" y1="97.70" x2="275.10" y2="99.90" stroke="#777" stroke-width="0.4" />
<rect x="268.70" y="98.50" width="0.50" height="0.60" fill="#888" />
<rect x="281.00" y="98.50" width="0.50" height="0.60" fill="#888" />
<line x1="299.70" y1="97.70" x2="299.70" y2="99.90" stroke="#777" stroke-width="0.4" />
<rect x="293.30" y="98.50" width="0.50" height="0.60" fill="#888" />
<rect x="305.60" y="98.50" width="0.50" height="0.60" fill="#888" />
<text x="312.00" y="100.05" font-family="'Liberation Sans', sans-serif" font-size="3.6" fill="#555" font-weight="bold" text-anchor="middle">1</text>
<line x1="324.30" y1="97.70" x2="324.30" y2="99.90" stroke="#777" stroke-width="0.4" />
<rect x="317.90" y="98.50" width="0.50" height="0.60" fill="#888" />
<rect x="330.20" y="98.50" width="0.50" height="0.60" fill="#888" />
<text x="336.60" y="100.05" font-family="'Liberation Sans', sans-serif" font-size="3.6" fill="#555" font-weight="bold" text-anchor="middle">2</text>
<line x1="348.90" y1="97.70" x2="348.90" y2="99.90" stroke="#777" stroke-width="0.4" />
<rect x="342.50" y="98.50" width="0.50" height="0.60" fill="#888" />
<rect x="354.80" y="98.50" width="0.50" height="0.60" fill="#888" />
<text x="361.20" y="100.05" font-family="'Liberation Sans', sans-serif" font-size="3.6" fill="#555" font-weight="bold" text-anchor="middle">3</text>
<line x1="373.50" y1="97.70" x2="373.50" y2="99.90" stroke="#777" stroke-width="0.4" />
<rect x="367.10" y="98.50" width="0.50" height="0.60" fill="#888" />
<rect x="379.40" y="98.50" width="0.50" height="0.60" fill="#888" />
<text x="385.80" y="100.05" font-family="'Liberation Sans', sans-serif" font-size="3.6" fill="#555" font-weight="bold" text-anchor="middle">4</text>
<line x1="398.10" y1="97.70" x2="398.10" y2="99.90" stroke="#777" stroke-width="0.4" />
<rect x="391.70" y="98.50" width="0.50" height="0.60" fill="#888" />
<rect x="404.00" y="98.50" width="0.50" height="0.60" fill="#888" />
<text x="410.40" y="100.05" font-family="'Liberation Sans', sans-serif" font-size="3.6" fill="#555" font-weight="bold" text-anchor="middle">5</text>
<line x1="422.70" y1="97.70" x2="422.70" y2="99.90" stroke="#777" stroke-width="0.4" />
<rect x="416.30" y="98.50" width="0.50" height="0.60" fill="#888" />
<rect x="428.60" y="98.50" width="0.50" height="0.60" fill="#888" />
<text x="435.00" y="100.05" font-family="'Liberation Sans', sans-serif" font-size="3.6" fill="#555" font-weight="bold" text-anchor="middle">6</text>
<line x1="447.30" y1="97.70" x2="447.30" y2="99.90" stroke="#777" stroke-width="0.4" />
<rect x="440.90" y="98.50" width="0.50" height="0.60" fill="#888" />
<rect x="453.20" y="98.50" width="0.50" height="0.60" fill="#888" />
<text x="459.60" y="100.05" font-family="'Liberation Sans', sans-serif" font-size="3.6" fill="#555" font-weight="bold" text-anchor="middle">7</text>
<line x1="471.90" y1="97.70" x2="471.90" y2="99.90" stroke="#777" stroke-width="0.4" />
<rect x="465.50" y="98.50" width="0.50" height="0.60" fill="#888" />
<rect x="477.80" y="98.50" width="0.50" height="0.60" fill="#888" />
<text x="484.20" y="100.05" font-family="'Liberation Sans', sans-serif" font-size="3.6" fill="#555" font-weight="bold" text-anchor="middle">8</text>
<line x1="496.50" y1="97.70" x2="496.50" y2="99.90" stroke="#777" stroke-width="0.4" />
<rect x="490.10" y="98.50" width="0.50" height="0.60" fill="#888" />
<rect x="502.40" y="98.50" width="0.50" height="0.60" fill="#888" />
<text x="508.80" y="100.05" font-family="'Liberation Sans', sans-serif" font-size="3.6" fill="#555" font-weight="bold" text-anchor="middle">9</text>
<line x1="521.10" y1="97.70" x2="521.10" y2="99.90" stroke="#777" stroke-width="0.4" />
<rect x="514.70" y="98.50" width="0.50" height="0.60" fill="#888" />
<rect x="527.00" y="98.50" width="0.50" height="0.60" fill="#888" />
<text x="533.40" y="100.05" font-family="'Liberation Sans', sans-serif" font-size="3.6" fill="#555" font-weight="bold" text-anchor="middle">10</text>
<line x1="545.70" y1="97.70" x2="545.70" y2="99.90" stroke="#777" stroke-width="0.4" />
<rect x="539.30" y="98.50" width="0.50" height="0.60" fill="#888" />
<rect x="551.60" y="98.50" width="0.50" height="0.60" fill="#888" />
<text x="558.00" y="100.05" font-family="'Liberation Sans', sans-serif" font-size="3.6" fill="#555" font-weight="bold" text-anchor="middle">11</text>
<line x1="570.30" y1="97.70" x2="570.30" y2="99.90" stroke="#777" stroke-width="0.4" />
<rect x="563.90" y="98.50" width="0.50" height="0.60" fill="#888" />
<rect x="576.20" y="98.50" width="0.50" height="0.60" fill="#888" />
<text x="582.60" y="100.05" font-family="'Liberation Sans', sans-serif" font-size="3.6" fill="#555" font-weight="bold" text-anchor="middle">12</text>
<line x1="594.90" y1="97.70" x2="594.90" y2="99.90" stroke="#777" stroke-width="0.4" />
<rect x="588.50" y="98.50" width="0.50" height="0.60" fill="#888" />
<rect x="600.80" y="98.50" width="0.50" height="0.60" fill="#888" />
<text x="607.20" y="100.05" font-family="'Liberation Sans', sans-serif" font-size="3.6" fill="#555" font-weight="bold" text-anchor="middle">13</text>
<line x1="619.50" y1="97.70" x2="619.50" y2="99.90" stroke="#777" stroke-width="0.4" />
<rect x="613.10" y="98.50" width="0.50" height="0.60" fill="#888" />
<rect x="625.40" y="98.50" width="0.50" height="0.60" fill="#888" />
<text x="631.80" y="100.05" font-family="'Liberation Sans', sans-serif" font-size="3.6" fill="#555" font-weight="bold" text-anchor="middle">14</text>
<line x1="644.10" y1="97.70" x2="644.10" y2="99.90" stroke="#777" stroke-width="0.4" />
<rect x="637.70" y="98.50" width="0.50" height="0.60" fill="#888" />
<rect x="650.00" y="98.50" width="0.50" height="0.60" fill="#888" />
<text x="656.40" y="100.05" font-family="'Liberation Sans', sans-serif" font-size="3.6" fill="#555" font-weight="bold" text-anchor="middle">15</text>
<path d="M293.7 95 H296.9 V96.4 L295.3 97.8 L293.7 96.4 Z" fill="#fff" stroke="#777" stroke-width="0.4" />
<path d="M293.7 100.8 V99.6 L295.3 98.2 L296.9 99.6 V100.8 Z" fill="#fff" stroke="#777" stroke-width="0.4" />
<rect x="293.70" y="100.80" width="3.20" height="2.80" fill="#fff" stroke="#777" stroke-width="0.4" />
<path d="M504.2 102 V100.2 L506 98.4 L507.8 100.2 V102 Z" fill="#fff" stroke="#777" stroke-width="0.4" />
<rect x="2.20" y="115.40" width="4.80" height="83.10" fill="#c8c8c8" />
<rect x="2.20" y="198.50" width="4.80" height="113.50" fill="#ffffff" />
<rect x="2.20" y="312.00" width="4.80" height="135.00" fill="#c8c8c8" />
<rect x="4.55" y="118.85" width="0.40" height="0.40" fill="#999" />
<text x="4.75" y="126.30" font-family="'Liberation Sans', sans-serif" font-size="3.2" fill="#666" text-anchor="middle" transform="rotate(-90 4.75 125.20)">3</text>
<line x1="3.90" y1="137.50" x2="5.60" y2="137.50" stroke="#888" stroke-width="0.35" />
<rect x="4.55" y="131.15" width="0.40" height="0.40" fill="#999" />
<rect x="4.55" y="143.45" width="0.40" height="0.40" fill="#999" />
<text x="4.75" y="150.90" font-family="'Liberation Sans', sans-serif" font-size="3.2" fill="#666" text-anchor="middle" transform="rotate(-90 4.75 149.80)">2</text>
<line x1="3.90" y1="162.10" x2="5.60" y2="162.10" stroke="#888" stroke-width="0.35" />
<rect x="4.55" y="155.75" width="0.40" height="0.40" fill="#999" />
<rect x="4.55" y="168.05" width="0.40" height="0.40" fill="#999" />
<text x="4.75" y="175.50" font-family="'Liberation Sans', sans-serif" font-size="3.2" fill="#666" text-anchor="middle" transform="rotate(-90 4.75 174.40)">1</text>
<line x1="3.90" y1="186.70" x2="5.60" y2="186.70" stroke="#888" stroke-width="0.35" />
<rect x="4.55" y="180.35" width="0.40" height="0.40" fill="#999" />
<rect x="4.55" y="192.65" width="0.40" height="0.40" fill="#999" />
<line x1="3.90" y1="211.30" x2="5.60" y2="211.30" stroke="#888" stroke-width="0.35" />
<rect x="4.55" y="204.95" width="0.40" height="0.40" fill="#999" />
<rect x="4.55" y="217.25" width="0.40" height="0.40" fill="#999" />
<text x="4.75" y="224.70" font-family="'Liberation Sans', sans-serif" font-size="3.2" fill="#666" text-anchor="middle" transform="rotate(-90 4.75 223.60)">1</text>
<line x1="3.90" y1="235.90" x2="5.60" y2="235.90" stroke="#888" stroke-width="0.35" />
<rect x="4.55" y="229.55" width="0.40" height="0.40" fill="#999" />
<rect x="4.55" y="241.85" width="0.40" height="0.40" fill="#999" />
<text x="4.75" y="249.30" font-family="'Liberation Sans', sans-serif" font-size="3.2" fill="#666" text-anchor="middle" transform="rotate(-90 4.75 248.20)">2</text>
<line x1="3.90" y1="260.50" x2="5.60" y2="260.50" stroke="#888" stroke-width="0.35" />
<rect x="4.55" y="254.15" width="0.40" height="0.40" fill="#999" />
<rect x="4.55" y="266.45" width="0.40" height="0.40" fill="#999" />
<text x="4.75" y="273.90" font-family="'Liberation Sans', sans-serif" font-size="3.2" fill="#666" text-anchor="middle" transform="rotate(-90 4.75 272.80)">3</text>
<line x1="3.90" y1="285.10" x2="5.60" y2="285.10" stroke="#888" stroke-width="0.35" />
<rect x="4.55" y="278.75" width="0.40" height="0.40" fill="#999" />
<rect x="4.55" y="291.05" width="0.40" height="0.40" fill="#999" />
<text x="4.75" y="298.50" font-family="'Liberation Sans', sans-serif" font-size="3.2" fill="#666" text-anchor="middle" transform="rotate(-90 4.75 297.40)">4</text>
<line x1="3.90" y1="309.70" x2="5.60" y2="309.70" stroke="#888" stroke-width="0.35" />
<rect x="4.55" y="303.35" width="0.40" height="0.40" fill="#999" />
<rect x="4.55" y="315.65" width="0.40" height="0.40" fill="#999" />
<text x="4.75" y="323.10" font-family="'Liberation Sans', sans-serif" font-size="3.2" fill="#666" text-anchor="middle" transform="rotate(-90 4.75 322.00)">5</text>
<line x1="3.90" y1="334.30" x2="5.60" y2="334.30" stroke="#888" stroke-width="0.35" />
<rect x="4.55" y="327.95" width="0.40" height="0.40" fill="#999" />
<rect x="4.55" y="340.25" width="0.40" height="0.40" fill="#999" />
<text x="4.75" y="347.70" font-family="'Liberation Sans', sans-serif" font-size="3.2" fill="#666" text-anchor="middle" transform="rotate(-90 4.75 346.60)">6</text>
<line x1="3.90" y1="358.90" x2="5.60" y2="358.90" stroke="#888" stroke-width="0.35" />
<rect x="4.55" y="352.55" width="0.40" height="0.40" fill="#999" />
<rect x="4.55" y="364.85" width="0.40" height="0.40" fill="#999" />
<text x="4.75" y="372.30" font-family="'Liberation Sans', sans-serif" font-size="3.2" fill="#666" text-anchor="middle" transform="rotate(-90 4.75 371.20)">7</text>
<line x1="3.90" y1="383.50" x2="5.60" y2="383.50" stroke="#888" stroke-width="0.35" />
<rect x="4.55" y="377.15" width="0.40" height="0.40" fill="#999" />
<rect x="4.55" y="389.45" width="0.40" height="0.40" fill="#999" />
<text x="4.75" y="396.90" font-family="'Liberation Sans', sans-serif" font-size="3.2" fill="#666" text-anchor="middle" transform="rotate(-90 4.75 395.80)">8</text>
<line x1="3.90" y1="408.10" x2="5.60" y2="408.10" stroke="#888" stroke-width="0.35" />
<rect x="4.55" y="401.75" width="0.40" height="0.40" fill="#999" />
<rect x="4.55" y="414.05" width="0.40" height="0.40" fill="#999" />
<text x="4.75" y="421.50" font-family="'Liberation Sans', sans-serif" font-size="3.2" fill="#666" text-anchor="middle" transform="rotate(-90 4.75 420.40)">9</text>
<line x1="3.90" y1="432.70" x2="5.60" y2="432.70" stroke="#888" stroke-width="0.35" />
<rect x="4.55" y="426.35" width="0.40" height="0.40" fill="#999" />
<rect x="4.55" y="438.65" width="0.40" height="0.40" fill="#999" />
<text x="4.75" y="446.10" font-family="'Liberation Sans', sans-serif" font-size="3.2" fill="#666" text-anchor="middle" transform="rotate(-90 4.75 445.00)">10</text>
<rect x="146.60" y="116.50" width="516.20" height="333.50" fill="#ffffff" />
<rect x="146.40" y="116.30" width="516.60" height="334.70" fill="none" stroke="#dcdcdc" stroke-width="0.4" />
<rect x="231.25" y="169.6" width="338.35" height="172" fill="none" stroke="#b0b0b0" stroke-width="0.55"/>
<ellipse cx="400.4" cy="255.6" rx="169" ry="85.8" fill="#5b9bd5" stroke="#2f5b8c" stroke-width="1.1"/>
<text x="299.2" y="249.2" font-family="'Liberation Serif', serif" font-size="17.3" font-weight="bold" fill="#ffffff">Hướng dẫn cách xóa khung</text>
<text x="375.5" y="270.7" font-family="'Liberation Serif', serif" font-size="17.3" font-weight="bold" fill="#ffffff">trong Word</text>
<line x1="400.40" y1="158.60" x2="400.40" y2="167.40" stroke="#777" stroke-width="0.6" />
<circle cx="400.5" cy="154.4" r="3.7" fill="#ffffff" stroke="#8a8a8a" stroke-width="0.6"/>
<path d="M402.9 153.6 A2.4 2.4 0 1 0 402.6 156" fill="none" stroke="#555" stroke-width="0.9" />
<path d="M401.4 154.6 L406.6 154.2 L404.2 151.4 Z" fill="#555" />
<circle cx="231.25" cy="169.6" r="1.9" fill="#ffffff" stroke="#555" stroke-width="0.6"/>
<circle cx="231.25" cy="255.6" r="1.9" fill="#ffffff" stroke="#555" stroke-width="0.6"/>
<circle cx="231.25" cy="341.6" r="1.9" fill="#ffffff" stroke="#555" stroke-width="0.6"/>
<circle cx="400.4" cy="169.6" r="1.9" fill="#ffffff" stroke="#555" stroke-width="0.6"/>
<circle cx="400.4" cy="341.6" r="1.9" fill="#ffffff" stroke="#555" stroke-width="0.6"/>
<circle cx="569.6" cy="169.6" r="1.9" fill="#ffffff" stroke="#555" stroke-width="0.6"/>
<circle cx="569.6" cy="255.6" r="1.9" fill="#ffffff" stroke="#555" stroke-width="0.6"/>
<circle cx="569.6" cy="341.6" r="1.9" fill="#ffffff" stroke="#555" stroke-width="0.6"/>
<g stroke="#3f6fc0" stroke-width="0.55" fill="none"><circle cx="209.8" cy="166.6" r="0.7"/><path d="M209.8 167.3 V171.2 M208.6 168.3 H211 M208 169.6 Q208.2 171.2 209.8 171.3 Q211.4 171.2 211.6 169.6"/></g>
<rect x="575.40" y="169.40" width="10.60" height="12.30" fill="#dde2ea" stroke="#8fa0b8" stroke-width="0.6" />
<path d="M579.2 178 Q579 174.8 581.6 174.8 Q583.6 174.8 584 176.6" fill="none" stroke="#3d4f66" stroke-width="1.1" />
<rect x="205.1" y="148.75" width="381.3" height="216.9" fill="none" stroke="#e8000b" stroke-width="3.2"/>
<text transform="translate(177.5 361) scale(0.91 1)" font-family="'DejaVu Sans', 'Liberation Sans', sans-serif" font-size="29" font-weight="bold" fill="#ee3338">1</text>
<text transform="translate(284.3 27.6) scale(0.92 1)" font-family="'DejaVu Sans', 'Liberation Sans', sans-serif" font-size="28" font-weight="bold" fill="#ee3338">2</text>
<rect x="308.2" y="2.7" width="41.1" height="28.4" fill="none" stroke="#e8000b" stroke-width="3.3"/>
</svg>
</body>
</html>
